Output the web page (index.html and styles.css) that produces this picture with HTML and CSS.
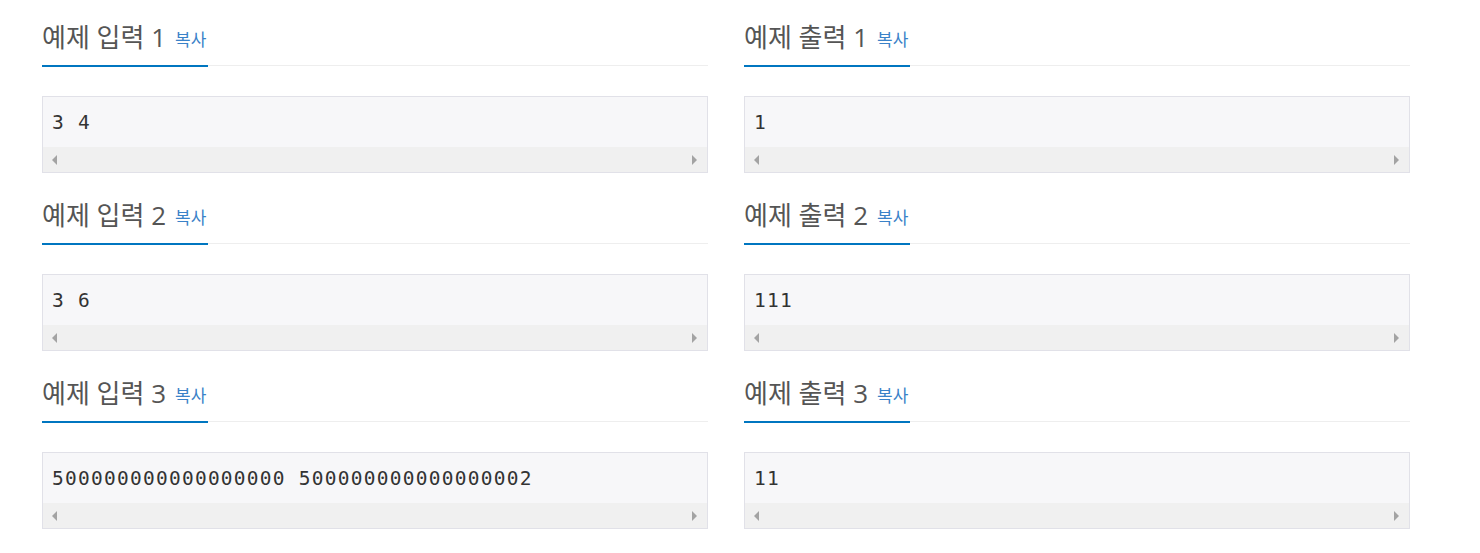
FILE: index.html
```html
<!DOCTYPE html>
<html lang="ko">
<head>
<meta charset="utf-8">
<title>예제</title>
<link rel="stylesheet" href="styles.css">
</head>
<body>
<div class="page">
  <div class="col">
    <section class="sample">
      <div class="headline"><h2>예제 입력 1<span class="copy">복사</span></h2></div>
      <div class="pre"><div class="code">3 4</div><div class="scroll"><span class="arr left"></span><span class="arr right"></span></div></div>
    </section>
    <section class="sample">
      <div class="headline"><h2>예제 입력 2<span class="copy">복사</span></h2></div>
      <div class="pre"><div class="code">3 6</div><div class="scroll"><span class="arr left"></span><span class="arr right"></span></div></div>
    </section>
    <section class="sample">
      <div class="headline"><h2>예제 입력 3<span class="copy">복사</span></h2></div>
      <div class="pre"><div class="code">500000000000000000 500000000000000002</div><div class="scroll"><span class="arr left"></span><span class="arr right"></span></div></div>
    </section>
  </div>
  <div class="col">
    <section class="sample">
      <div class="headline"><h2>예제 출력 1<span class="copy">복사</span></h2></div>
      <div class="pre"><div class="code">1</div><div class="scroll"><span class="arr left"></span><span class="arr right"></span></div></div>
    </section>
    <section class="sample">
      <div class="headline"><h2>예제 출력 2<span class="copy">복사</span></h2></div>
      <div class="pre"><div class="code">111</div><div class="scroll"><span class="arr left"></span><span class="arr right"></span></div></div>
    </section>
    <section class="sample">
      <div class="headline"><h2>예제 출력 3<span class="copy">복사</span></h2></div>
      <div class="pre"><div class="code">11</div><div class="scroll"><span class="arr left"></span><span class="arr right"></span></div></div>
    </section>
  </div>
</div>
</body>
</html>
```
FILE: styles.css
```css
html, body {
  margin: 0;
  padding: 0;
  background: #fff;
}
.page {
  display: flex;
  gap: 36px;
  padding: 20px 0 0 42px;
}
.col {
  width: 666px;
  display: flex;
  flex-direction: column;
}
.sample {
  margin-bottom: 25px;
}
.headline {
  border-bottom: 1px solid #eeeeee;
  margin-bottom: 30px;
}
.headline h2 {
  display: inline-block;
  margin: 0 0 -2px 0;
  padding: 1px 2px 11px 0;
  font-family: "Open Sans", "Noto Sans CJK KR", sans-serif;
  font-weight: 400;
  font-size: 26px;
  line-height: 33px;
  color: #555555;
  border-bottom: 2px solid #0076c0;
  white-space: nowrap;
}
.copy {
  font-family: "Noto Sans CJK KR", sans-serif;
  font-size: 17px;
  line-height: 20px;
  color: #3a82c8;
  margin-left: 9px;
  vertical-align: 1px;
}
.pre {
  background: #f7f7f9;
  border: 1px solid #e1e1e8;
  display: flex;
  flex-direction: column;
}
.code {
  height: 50px;
  line-height: 51px;
  padding: 0 9px;
  font-family: "DejaVu Sans Mono", monospace;
  font-size: 19.5px;
  letter-spacing: 1.25px;
  color: #333333;
  white-space: pre;
}
.scroll {
  height: 25px;
  background: #f0f0f0;
  display: flex;
  align-items: center;
  justify-content: space-between;
  padding: 0 10px 0 9px;
}
.arr {
  width: 0;
  height: 0;
  border-top: 5px solid transparent;
  border-bottom: 5px solid transparent;
}
.arr.left {
  border-right: 5px solid #a3a3a3;
}
.arr.right {
  border-left: 5px solid #a3a3a3;
}
```
